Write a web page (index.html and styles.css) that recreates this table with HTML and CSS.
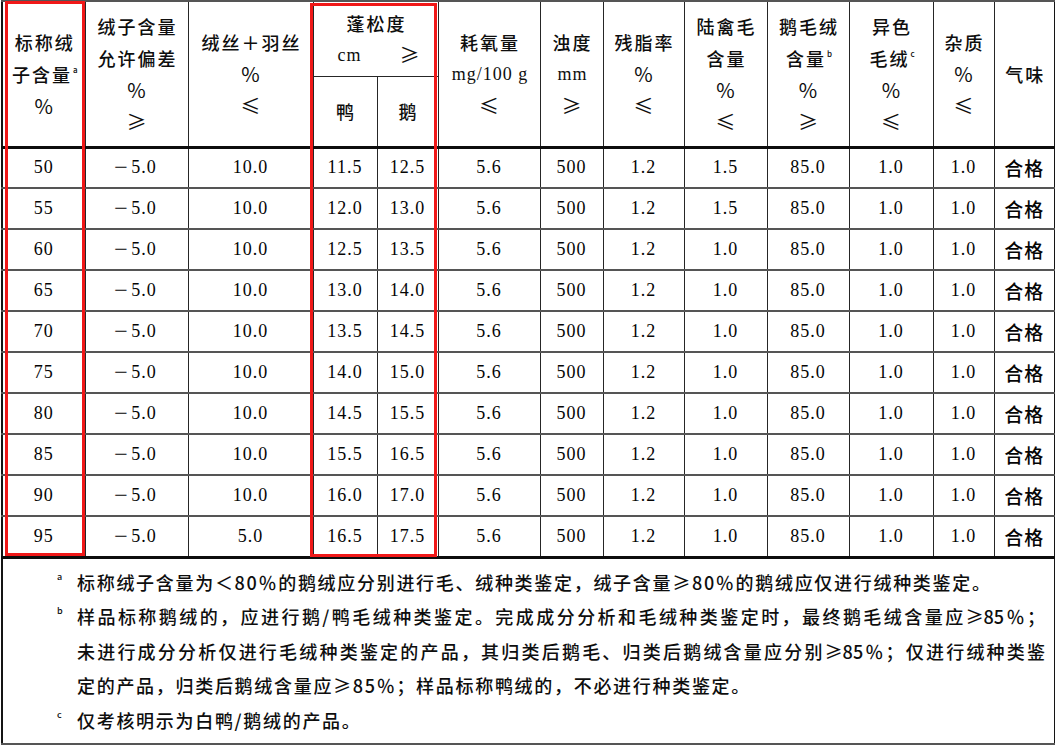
FILE: index.html
```html
<!DOCTYPE html>
<html lang="zh-CN">
<head>
<meta charset="utf-8">
<title>羽绒指标</title>
<link rel="stylesheet" href="styles.css">
</head>
<body>
<div class="sheet">
  <table class="std">
    <colgroup>
      <col style="width:83px"><col style="width:103px"><col style="width:125px"><col style="width:64px"><col style="width:61px"><col style="width:102px"><col style="width:63px"><col style="width:81px"><col style="width:83px"><col style="width:82px"><col style="width:84px"><col style="width:61px"><col style="width:61px">
    </colgroup>
    <thead>
      <tr class="h1">
        <th rowspan="2" class="hd"><div>标称绒</div><div>子含量<sup>a</sup></div><div class="sym">%</div></th>
        <th rowspan="2" class="hd"><div>绒子含量</div><div>允许偏差</div><div class="sym">%</div><div class="sym">≥</div></th>
        <th rowspan="2" class="hd"><div>绒丝＋羽丝</div><div class="sym">%</div><div class="sym">≤</div></th>
        <th colspan="2" class="fluff"><div>蓬松度</div><div class="unitrow"><span class="lat">cm</span><span class="sym">≥</span></div></th>
        <th rowspan="2" class="hd"><div>耗氧量</div><div class="lat">mg/100 g</div><div class="sym">≤</div></th>
        <th rowspan="2" class="hd"><div>浊度</div><div class="lat">mm</div><div class="sym">≥</div></th>
        <th rowspan="2" class="hd"><div>残脂率</div><div class="sym">%</div><div class="sym">≤</div></th>
        <th rowspan="2" class="hd"><div>陆禽毛</div><div>含量</div><div class="sym">%</div><div class="sym">≤</div></th>
        <th rowspan="2" class="hd"><div>鹅毛绒</div><div>含量<sup>b</sup></div><div class="sym">%</div><div class="sym">≥</div></th>
        <th rowspan="2" class="hd"><div>异色</div><div>毛绒<sup>c</sup></div><div class="sym">%</div><div class="sym">≤</div></th>
        <th rowspan="2" class="hd"><div>杂质</div><div class="sym">%</div><div class="sym">≤</div></th>
        <th rowspan="2" class="hd"><div>气味</div></th>
      </tr>
      <tr class="h2">
        <th class="hd">鸭</th>
        <th class="hd">鹅</th>
      </tr>
    </thead>
    <tbody class="data">
      <tr><td>50</td><td><span class="neg">−</span>5.0</td><td>10.0</td><td>11.5</td><td>12.5</td><td>5.6</td><td>500</td><td>1.2</td><td>1.5</td><td>85.0</td><td>1.0</td><td>1.0</td><td class="ok">合格</td></tr>
      <tr><td>55</td><td><span class="neg">−</span>5.0</td><td>10.0</td><td>12.0</td><td>13.0</td><td>5.6</td><td>500</td><td>1.2</td><td>1.5</td><td>85.0</td><td>1.0</td><td>1.0</td><td class="ok">合格</td></tr>
      <tr><td>60</td><td><span class="neg">−</span>5.0</td><td>10.0</td><td>12.5</td><td>13.5</td><td>5.6</td><td>500</td><td>1.2</td><td>1.0</td><td>85.0</td><td>1.0</td><td>1.0</td><td class="ok">合格</td></tr>
      <tr><td>65</td><td><span class="neg">−</span>5.0</td><td>10.0</td><td>13.0</td><td>14.0</td><td>5.6</td><td>500</td><td>1.2</td><td>1.0</td><td>85.0</td><td>1.0</td><td>1.0</td><td class="ok">合格</td></tr>
      <tr><td>70</td><td><span class="neg">−</span>5.0</td><td>10.0</td><td>13.5</td><td>14.5</td><td>5.6</td><td>500</td><td>1.2</td><td>1.0</td><td>85.0</td><td>1.0</td><td>1.0</td><td class="ok">合格</td></tr>
      <tr><td>75</td><td><span class="neg">−</span>5.0</td><td>10.0</td><td>14.0</td><td>15.0</td><td>5.6</td><td>500</td><td>1.2</td><td>1.0</td><td>85.0</td><td>1.0</td><td>1.0</td><td class="ok">合格</td></tr>
      <tr><td>80</td><td><span class="neg">−</span>5.0</td><td>10.0</td><td>14.5</td><td>15.5</td><td>5.6</td><td>500</td><td>1.2</td><td>1.0</td><td>85.0</td><td>1.0</td><td>1.0</td><td class="ok">合格</td></tr>
      <tr><td>85</td><td><span class="neg">−</span>5.0</td><td>10.0</td><td>15.5</td><td>16.5</td><td>5.6</td><td>500</td><td>1.2</td><td>1.0</td><td>85.0</td><td>1.0</td><td>1.0</td><td class="ok">合格</td></tr>
      <tr><td>90</td><td><span class="neg">−</span>5.0</td><td>10.0</td><td>16.0</td><td>17.0</td><td>5.6</td><td>500</td><td>1.2</td><td>1.0</td><td>85.0</td><td>1.0</td><td>1.0</td><td class="ok">合格</td></tr>
      <tr><td>95</td><td><span class="neg">−</span>5.0</td><td>5.0</td><td>16.5</td><td>17.5</td><td>5.6</td><td>500</td><td>1.2</td><td>1.0</td><td>85.0</td><td>1.0</td><td>1.0</td><td class="ok">合格</td></tr>
    </tbody>
    <tfoot>
      <tr>
        <td colspan="13" class="notes">
          <div class="note"><span class="mark">a</span><div class="ntext"><div class="ln">标称绒子含量为＜80％的鹅绒应分别进行毛、绒种类鉴定，绒子含量≥80％的鹅绒应仅进行绒种类鉴定。</div></div></div>
          <div class="note"><span class="mark">b</span><div class="ntext"><div class="ln just">样品标称鹅绒的，应进行鹅/鸭毛绒种类鉴定。完成成分分析和毛绒种类鉴定时，最终鹅毛绒含量应≥85％；</div><div class="ln just">未进行成分分析仅进行毛绒种类鉴定的产品，其归类后鹅毛、归类后鹅绒含量应分别≥85％；仅进行绒种类鉴</div><div class="ln">定的产品，归类后鹅绒含量应≥85％；样品标称鸭绒的，不必进行种类鉴定。</div></div></div>
          <div class="note"><span class="mark">c</span><div class="ntext"><div class="ln">仅考核明示为白鸭/鹅绒的产品。</div></div></div>
        </td>
      </tr>
    </tfoot>
  </table>
  <div class="redbox box-a"></div>
  <div class="redbox box-b"></div>
</div>
</body>
</html>
```

FILE: styles.css
```css
* { box-sizing: border-box; }
html, body { margin: 0; padding: 0; background: #ffffff; }
body {
  font-family: "Noto Sans CJK SC", "Noto Sans", sans-serif;
  color: #0e0e0e;
}
.sheet {
  position: relative;
  width: 1055px;
  height: 747px;
  padding-left: 1px;
}
.std {
  border-collapse: collapse;
  table-layout: fixed;
  width: 1053px;
  border: 2px solid #141414;
}
.std th, .std td {
  padding: 0;
  text-align: center;
  vertical-align: middle;
  font-weight: 400;
  border-left: 1px solid #262626;
  border-right: 1px solid #262626;
  border-top: 2px solid #555;
  border-bottom: 2px solid #555;
}
.std th {
  font-size: 18px;
  font-weight: 500;
  line-height: 32px;
  letter-spacing: 2px;
  padding-left: 2px;
}
.h1 { height: 75px; }
.h2 { height: 71px; }
.h2 th { border-top: 1px solid #262626; }
.std th.hd { border-bottom: 3px solid #0d0d0d; }
.std th.fluff { vertical-align: top; padding-top: 5px; border-bottom: 1px solid #262626; }
.unitrow {
  display: flex;
  justify-content: space-between;
  align-items: center;
  padding: 0 16px 0 22px;
}
.lat {
  font-family: "Liberation Serif", serif;
  font-weight: 400;
  letter-spacing: 1px;
}
.sym {
  font-size: 20px;
  font-weight: 400;
}
sup {
  font-size: 8px;
  line-height: 0;
  vertical-align: 9px;
  letter-spacing: 0;
  margin-left: 1px;
}
.data tr { height: 41px; }
.data td {
  font-family: "Liberation Serif", serif;
  font-size: 18px;
  letter-spacing: 1px;
  color: #050505;
}
.neg {
  display: inline-block;
  transform: scaleX(1.35);
  margin-right: 4px;
}
.data tr:first-child td { border-top: 3px solid #0d0d0d; }
.data td.ok {
  font-family: "Noto Sans CJK SC", sans-serif;
  font-size: 19px;
  font-weight: 500;
  letter-spacing: 1px;
}
.std td.notes {
  border-top: 3px solid #0d0d0d;
  height: 187px;
  text-align: left;
  vertical-align: top;
  padding: 6px 0 0 54px;
  font-size: 18px;
  font-weight: 500;
  line-height: 34.5px;
  letter-spacing: 1.7px;
}
.note { display: flex; }
.mark {
  width: 20px;
  flex: none;
  font-size: 9px;
  line-height: 24px;
  letter-spacing: 0;
}
.ntext { width: 968px; }
.ln { white-space: nowrap; }
.ln.just { text-align: justify; text-align-last: justify; letter-spacing: 0; }
.redbox {
  position: absolute;
  border: 3px solid #f01818;
  pointer-events: none;
}
.box-a { left: 5px; top: 1px; width: 80px; height: 555px; }
.box-b { left: 310px; top: 3px; width: 127px; height: 554px; }
```
